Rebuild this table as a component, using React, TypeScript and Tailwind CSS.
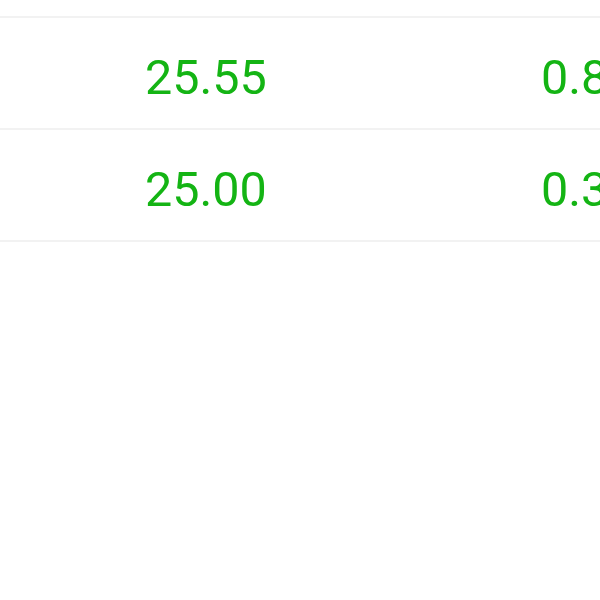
const rows = [
  { price: "25.55", change: "0.86" },
  { price: "25.00", change: "0.32" },
];

export default function App() {
  return (
    <div className="w-[600px] h-[600px] overflow-hidden bg-white font-['Roboto',sans-serif]">
      <div className="h-[18px] border-b-2 border-[#f2f2f2]" />
      {rows.map((r) => (
        <div
          key={r.price}
          className="h-[112px] border-b-2 border-[#f2f2f2] flex items-start pt-[36px] text-[48.5px] leading-none text-[#14b414] whitespace-nowrap"
        >
          <div className="w-[145px] shrink-0" />
          <div className="w-[396px] shrink-0">{r.price}</div>
          <div className="shrink-0">{r.change}</div>
        </div>
      ))}
    </div>
  );
}
